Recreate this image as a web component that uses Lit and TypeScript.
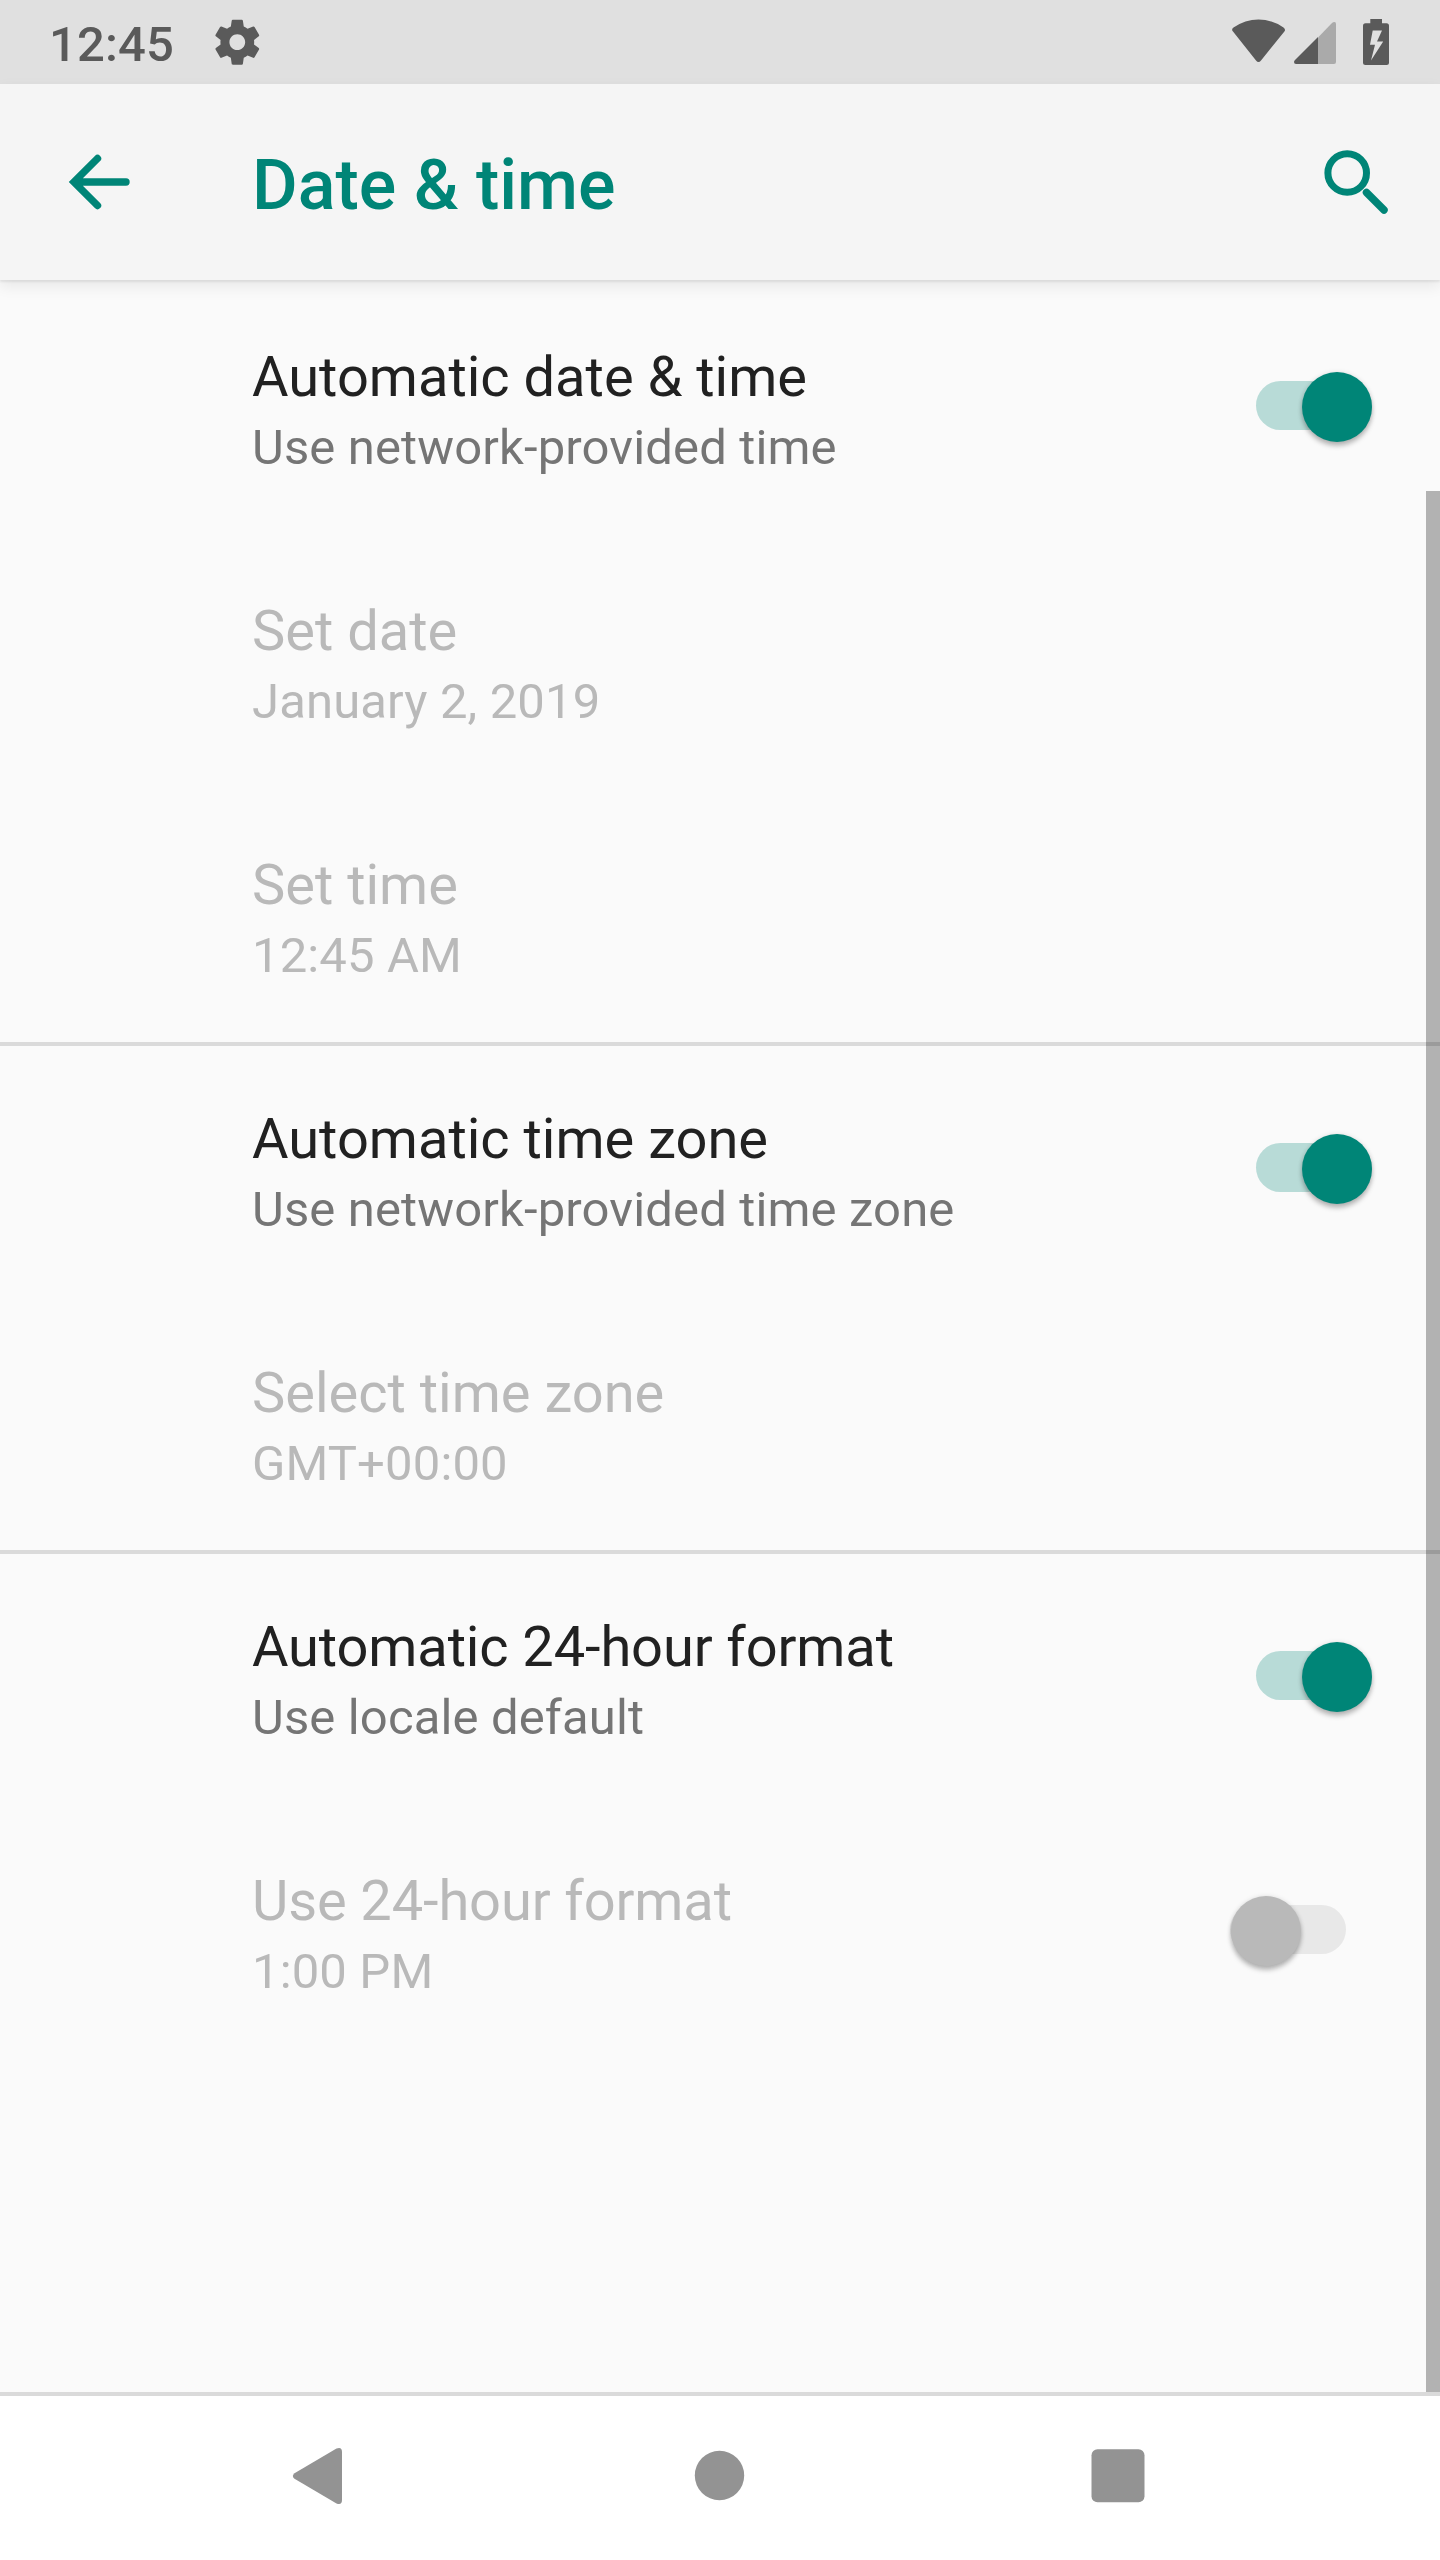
import { LitElement, html, css, nothing } from "lit";
import { customElement, property } from "lit/decorators.js";

interface Pref {
  title: string;
  summary: string;
  disabled?: boolean;
  tight?: boolean;
  toggle?: "on" | "off";
}

const groups: Pref[][] = [
  [
    { title: "Automatic date & time", summary: "Use network-provided time", toggle: "on" },
    { title: "Set date", summary: "January 2, 2019", disabled: true },
    { title: "Set time", summary: "12:45 AM", disabled: true },
  ],
  [
    { title: "Automatic time zone", summary: "Use network-provided time zone", toggle: "on" },
    { title: "Select time zone", summary: "GMT+00:00", disabled: true },
  ],
  [
    { title: "Automatic 24-hour format", summary: "Use locale default", toggle: "on", tight: true },
    { title: "Use 24-hour format", summary: "1:00 PM", disabled: true, toggle: "off", tight: true },
  ],
];

@customElement("pref-switch")
export class PrefSwitch extends LitElement {
  @property({ type: Boolean, reflect: true }) on = false;

  static styles = css`
    :host { display: flex; align-items: center; width: 116px; height: 70px; }
    .track {
      display: flex; align-items: center; width: 116px; height: 49px;
      border-radius: 25px; background: #e8e8e8; margin-bottom: 1px;
    }
    .thumb {
      flex: none; width: 70px; height: 70px; border-radius: 50%;
      background: #b9b9b9; margin: 2px 0 0 0.6px;
      box-shadow: 0 4px 5px rgba(0, 0, 0, 0.26), 0 0 5px rgba(0, 0, 0, 0.1);
    }
    :host([on]) .track { background: #b8dbd7; justify-content: flex-end; }
    :host([on]) .thumb { background: #008577; margin: 2px 0.3px 0 0; }
  `;

  render() {
    return html`<div class="track"><div class="thumb"></div></div>`;
  }
}

@customElement("app-root")
export class AppRoot extends LitElement {
  static styles = css`
    :host {
      display: flex; flex-direction: column; width: 1440px; height: 2560px;
      background: #fafafa; font-family: Roboto, sans-serif; overflow: hidden;
    }
    svg { display: block; flex: none; }
    .status {
      flex: none; display: flex; height: 84px; box-sizing: border-box; background: #e0e0e0;
      color: #5a5a5a; justify-content: space-between;
    }
    .clock {
      font-size: 49px; line-height: 57px; font-weight: 500; padding: 16px 0 0 49px; width: 157px;
      letter-spacing: 0.15px;
    }
    .left { display: flex; }
    .bar {
      flex: none; display: flex; height: 196px; background: #f5f5f5; color: #008577;
      box-shadow: 0 2px 2px rgba(0, 0, 0, 0.07), 0 6px 14px rgba(0, 0, 0, 0.08);
    }
    .heading {
      flex: 1; margin: 0; padding-top: 60px; font-size: 70px; line-height: 82px; font-weight: 500;
    }
    .body { flex: 1; display: flex; justify-content: space-between; min-height: 0; }
    .list { flex: 1; margin-right: -14px; }
    .thumbbar { flex: none; width: 14px; margin-top: 211px; background: rgba(0, 0, 0, 0.285); z-index: 1; }
    .group + .group { box-shadow: inset 0 4px 0 #dadada; }
    .row {
      display: flex; height: 254px; box-sizing: border-box; padding: 64px 68px 0 252px;
      justify-content: space-between;
    }
    .title { font-size: 56px; line-height: 66px; color: #212121; }
    .tight .title { letter-spacing: -0.12px; }
    .summary {
      font-size: 49px; line-height: 57px; margin-top: 9px; color: #757575; letter-spacing: 0.14px;
    }
    .disabled .title, .disabled .summary { color: #b9b9b9; }
    .row pref-switch { margin-top: 27px; }
    .row.disabled pref-switch { margin-right: 26px; }
    .nav {
      flex: none; height: 168px; box-sizing: border-box; border-top: 4px solid #dadada; background: #fff;
    }
  `;

  private row(p: Pref) {
    return html`<div class="row ${p.disabled ? "disabled" : ""} ${p.tight ? "tight" : ""}">
      <div>
        <div class="title">${p.title}</div>
        <div class="summary">${p.summary}</div>
      </div>
      ${p.toggle ? html`<pref-switch ?on=${p.toggle === "on"}></pref-switch>` : nothing}
    </div>`;
  }

  render() {
    return html`
      <div class="status">
        <div class="left">
          <div class="clock">12:45</div>
          <svg width="64" height="84" viewBox="206 0 64 84">
            <path
              transform="translate(210.3 15.2) scale(2.25)"
              fill="#5a5a5a"
              d="M19.43 12.98c.04-.32.07-.64.07-.98s-.03-.66-.07-.98l2.11-1.65c.19-.15.24-.42.12-.64l-2-3.46c-.12-.22-.39-.3-.61-.22l-2.49 1c-.52-.4-1.08-.73-1.69-.98l-.38-2.65C14.46 2.18 14.25 2 14 2h-4c-.25 0-.46.18-.49.42l-.38 2.65c-.61.25-1.17.59-1.69.98l-2.49-1c-.23-.09-.49 0-.61.22l-2 3.46c-.13.22-.07.49.12.64l2.11 1.65c-.04.32-.07.65-.07.98s.03.66.07.98l-2.11 1.65c-.19.15-.24.42-.12.64l2 3.46c.12.22.39.3.61.22l2.49-1c.52.4 1.08.73 1.69.98l.38 2.65c.03.24.24.42.49.42h4c.25 0 .46-.18.49-.42l.38-2.65c.61-.25 1.17-.59 1.69-.98l2.49 1c.23.09.49 0 .61-.22l2-3.46c.12-.22.07-.49-.12-.64l-2.11-1.65zM12 15.5c-1.93 0-3.5-1.57-3.5-3.5s1.57-3.5 3.5-3.5 3.5 1.57 3.5 3.5-1.57 3.5-3.5 3.5z"
            ></path>
          </svg>
        </div>
        <svg width="220" height="84" viewBox="1220 0 220 84" fill="#5a5a5a">
          <path d="M1233 31.5Q1231 29.500 1233.500 27.600Q1245 19.500 1258.500 19.500T1283.500 27.600Q1286 29.500 1284.400 31.500L1261 60.500Q1258.500 63.500 1256 60.500Z"></path>
          <path fill="#aaa" d="M1318 37.500L1332 23Q1333 22 1334.500 22Q1336 22 1336 24V62Q1336 64 1334 64H1318Z"></path>
          <path d="M1318 37V64H1296Q1294 64 1294 62Q1294 61 1295 60Z"></path>
          <path fill-rule="evenodd" d="M1370.300 19H1382V23.300H1386.500Q1389 23.300 1389 25.800V62.500Q1389 65 1386.500 65H1365.500Q1363 65 1363 62.500V25.800Q1363 23.300 1365.500 23.300H1370.300ZM1372.700 30.500L1370 44.700H1375L1371 60.500L1383.200 41.500H1377L1382 30.500Z"></path>
        </svg>
      </div>
      <div class="bar">
        <svg width="252" height="196" viewBox="0 84 252 196" fill="none" stroke="#008577" stroke-width="7.400" stroke-linecap="round">
          <path d="M126 182H76M97.500 158.500L74 182L97.500 205.500"></path>
        </svg>
        <h1 class="heading">Date &amp; time</h1>
        <svg width="140" height="196" viewBox="1300 84 140 196" fill="none" stroke="#008577" stroke-linecap="round">
          <circle cx="1347.200" cy="173" r="19.300" stroke-width="7"></circle>
          <path d="M1366.500 192.500L1384 210" stroke-width="7.500"></path>
        </svg>
      </div>
      <div class="body">
        <div class="list">
          ${groups.map((g) => html`<div class="group">${g.map((p) => this.row(p))}</div>`)}
        </div>
        <div class="thumbbar"></div>
      </div>
      <div class="nav">
        <svg width="1440" height="164" viewBox="0 2396 1440 164" fill="#939393">
          <path d="M294.500 2478.800Q291.200 2476 294.500 2473.200L336.500 2448.600Q342 2446.600 342 2452V2500Q342 2505.400 336.500 2503.400Z"></path>
          <circle cx="719.500" cy="2475.500" r="24.700"></circle>
          <rect x="1091.500" y="2449.300" width="53" height="53" rx="6"></rect>
        </svg>
      </div>
    `;
  }
}
